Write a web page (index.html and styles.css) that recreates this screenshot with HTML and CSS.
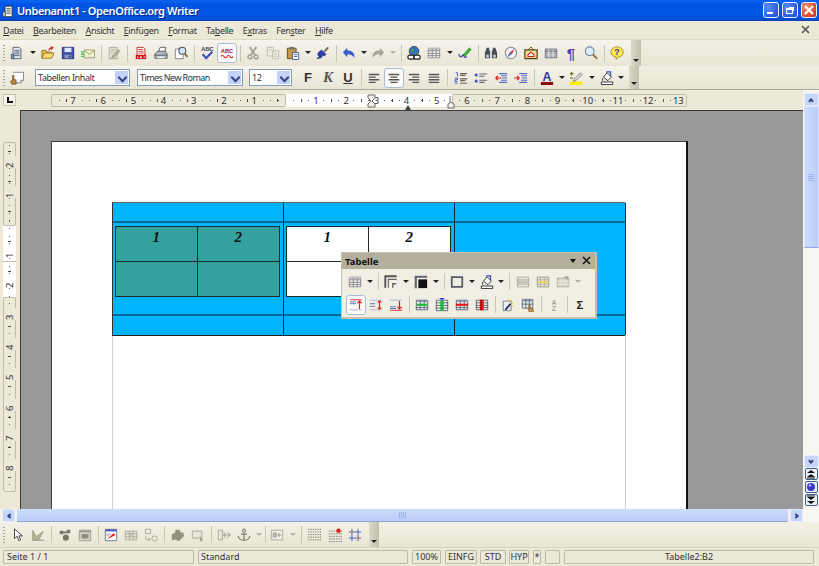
FILE: index.html
```html
<!DOCTYPE html>
<html lang="de">

<head>
	<meta charset="UTF-8">
	<title>Unbenannt1 - OpenOffice.org Writer</title>
	<link rel="stylesheet" href="styles.css">
</head>

<body>
	<!-- icon sprite, all 16x16 -->
	<svg class="sprite" xmlns="http://www.w3.org/2000/svg">
		<symbol id="i-new" viewBox="0 0 16 16"><path d="M3.5 1.5h7l2 2v11h-9z" fill="#e9eef4" stroke="#46566e"/><path d="M5 5h6M5 7h6M5 9h6M5 11h6" stroke="#46566e"/><path d="M1.5 9.5h3v5h-3z" fill="#7d8ea6" stroke="#46566e"/></symbol>
		<symbol id="i-open" viewBox="0 0 16 16"><path d="M1 14V5h5l1 2h5v2" fill="#e8b93c" stroke="#8f7020"/><path d="M1 14l3-6h11l-3 6z" fill="#f8dc78" stroke="#8f7020"/><path d="M9 5c0-2 2-3 4-3M11 1l2.5 1-2 2" fill="none" stroke="#d8201c" stroke-width="1.3"/></symbol>
		<symbol id="i-save" viewBox="0 0 16 16"><path d="M1.5 1.5h13v13h-13z" fill="#3a50a8" stroke="#1f2d70"/><path d="M4 2h8v5H4z" fill="#dfe6f5"/><path d="M4 10h8v4H4z" fill="#8c96b8"/><path d="M9 11h2v2H9z" fill="#1f2d70"/></symbol>
		<symbol id="i-mail" viewBox="0 0 16 16"><path d="M3.5 4.5h12v9h-12z" fill="#f4f0c8" stroke="#8c9a7a"/><path d="M3.5 5l6 4.5 6-4.5" fill="none" stroke="#8c9a7a"/><path d="M0 7h3M0 9.5h4M0 12h3" stroke="#2fc24a" stroke-width="1.3"/></symbol>
		<symbol id="i-edit" viewBox="0 0 16 16"><path d="M2.5 1.5h9v13h-9z" fill="#e9e6d8" stroke="#a5a294"/><path d="M4 4h6M4 6h5M4 8h3" stroke="#b5b2a4"/><path d="M6 11l7-7 2 2-7 7-3 1z" fill="#aeab9a" stroke="#8e8b7c" stroke-width=".5"/></symbol>
		<symbol id="i-pdf" viewBox="0 0 16 16"><path d="M3.5 1.5h7l2 2v9h-9z" fill="#fff" stroke="#a52020"/><path d="M5 4h5M5 6h6M5 8h6" stroke="#d03030"/><path d="M2 10h12v5H2z" fill="#d01818"/><path d="M4 12h1v2H4zM7 12h2v2H7zM11 12h2v1h-2z" fill="#fff"/></symbol>
		<symbol id="i-print" viewBox="0 0 16 16"><path d="M5 7l2-5.5h6.5L12 7z" fill="#fff" stroke="#50545e"/><path d="M1 9l3-3h9l2 3v5H1z" fill="#b9bcc4" stroke="#50545e"/><path d="M1 10h14v1H1z" fill="#50545e"/><path d="M11 8h2v1h-2z" fill="#22c060"/><path d="M4 12h8v2H4z" fill="#eee"/></symbol>
		<symbol id="i-preview" viewBox="0 0 16 16"><path d="M1.5 3.5h9v11h-9z" fill="#fff" stroke="#7a7a80"/><circle cx="9.5" cy="5.5" r="4" fill="#cfe4f7" stroke="#50586a" stroke-width="1.2"/><path d="M12 8.5l3.5 4" stroke="#8a7038" stroke-width="2.2"/></symbol>
		<symbol id="i-cut" viewBox="0 0 16 16"><path d="M4 1l7 10M12 1L5 11" stroke="#a8a598" stroke-width="2.2"/><circle cx="4.5" cy="12.5" r="2.2" fill="none" stroke="#a8a598" stroke-width="1.8"/><circle cx="11.5" cy="12.5" r="2.2" fill="none" stroke="#a8a598" stroke-width="1.8"/></symbol>
		<symbol id="i-copy" viewBox="0 0 16 16"><path d="M1.5 1.5h7v10h-7z" fill="#f2f0e6" stroke="#b9b6a8"/><path d="M7.5 5.5h7v9h-7z" fill="#f2f0e6" stroke="#b9b6a8"/><path d="M3 4h4M3 6h3M9 8h4M9 10h4M9 12h4" stroke="#c5c2b4"/></symbol>
		<symbol id="i-paste" viewBox="0 0 16 16"><path d="M1.5 2.5h10v12h-10z" fill="#c49a4a" stroke="#5a4520"/><path d="M4 1h5v3H4z" fill="#6f7078"/><path d="M7.5 7.5h7v8h-7z" fill="#fff" stroke="#3c50a0"/><path d="M9 10h4M9 12h4" stroke="#3c50a0"/></symbol>
		<symbol id="i-brush" viewBox="0 0 16 16"><path d="M9.5 6.5l4.5-5" stroke="#7a6a40" stroke-width="2.2"/><path d="M6.5 4.500l5 5-2 2-2-1-1.500 3-5 1 3-3-2-1 .5-3z" fill="#2f3fa8" stroke="#1c2670" stroke-width=".6"/></symbol>
		<symbol id="i-undo" viewBox="0 0 16 16"><path d="M1 7l5-5v3c5 0 9 2 8 9-1-3-4-4.5-8-4.5V13z" fill="#3b5cc8"/></symbol>
		<symbol id="i-redo" viewBox="0 0 16 16"><path d="M15 7l-5-5v3c-5 0-9 2-8 9 1-3 4-4.5 8-4.5V13z" fill="#a8a598"/></symbol>
		<symbol id="i-globe" viewBox="0 0 16 16"><circle cx="8" cy="6" r="5.5" fill="#3a6ac8" stroke="#345"/><path d="M5 2l3 2-1 3-3-1zM9 7l3 0 0 3-3 0z" fill="#36a24a"/><rect x="1" y="10.5" width="7" height="4.5" rx="2.2" fill="#fff" stroke="#222" stroke-width="1.4"/><rect x="8" y="10.5" width="7" height="4.5" rx="2.2" fill="#fff" stroke="#222" stroke-width="1.4"/></symbol>
		<symbol id="i-table" viewBox="0 0 16 16"><path d="M1.5 2.5h13v11h-13z" fill="#f5f4ee" stroke="#85858a"/><path d="M1.5 2.5h13V5h-13z" fill="#c6c6ca"/><path d="M1 5.5h14M1 8.500h14M1 11h14M6 3v10M10.5 3v10" stroke="#85858a"/></symbol>
		<symbol id="i-draw" viewBox="0 0 16 16"><path d="M1 9q1 5 3 3t2-2 1 2 3 0" fill="none" stroke="#4a3aa8" stroke-width="1.3"/><path d="M6 10l7-8 2 2-7 8z" fill="#36b836" stroke="#1a701a" stroke-width=".6"/></symbol>
		<symbol id="i-find" viewBox="0 0 16 16"><path d="M3 2h3v3h1v9H1V8zM13 2h-3v3H9v9h6V8z" fill="#4a4e58"/><path d="M2.5 10h3v3h-3zM10.5 10h3v3h-3z" fill="#cfd2da"/></symbol>
		<symbol id="i-nav" viewBox="0 0 16 16"><circle cx="8" cy="8" r="6.5" fill="#eef0f4" stroke="#8a8f9a" stroke-width="1.2"/><path d="M12 3.5L7 7l2 2z" fill="#d82020"/><path d="M4 12.5L7 7l2 2z" fill="#3a50b8"/></symbol>
		<symbol id="i-gallery" viewBox="0 0 16 16"><path d="M5 4.5L8 1l3 3.500" fill="none" stroke="#6a4a10"/><path d="M1 4.5h14v10H1z" fill="#f0d890" stroke="#5f4410" stroke-width="1.4"/><path d="M4.5 10L8 7l3.5 3v2h-7z" fill="#fff" stroke="#d8201c" stroke-width="1.2"/></symbol>
		<symbol id="i-data" viewBox="0 0 16 16"><path d="M1.5 3.5h13v10h-13z" fill="#bec1c6" stroke="#6a6e76"/><path d="M1 6h14" stroke="#6a6e76" stroke-width="1.3"/><path d="M5.5 4v9M10.5 4v9" stroke="#e8e8ea"/><path d="M3 8h1v1H3zM3 11h1v1H3zM7.5 8h1v1h-1zM7.5 11h1v1h-1zM12 8h1v1h-1zM12 11h1v1h-1z" fill="#555"/></symbol>
		<symbol id="i-zoom" viewBox="0 0 16 16"><circle cx="6.5" cy="6" r="5" fill="#dcecf8" stroke="#7a8a9a" stroke-width="1.3"/><path d="M10 9.5l5 5" stroke="#9a8048" stroke-width="2.5"/></symbol>
		<symbol id="i-styles" viewBox="0 0 16 16"><path d="M3.5 1.5h12v9l-3 3h-6" fill="#fff" stroke="#7a7a80"/><path d="M12.5 13.5v-3h3" fill="#ddd" stroke="#7a7a80"/><path d="M3 5h1.5v5H7v5H2L.5 12 2 10.500h1z" fill="#bd8a3e" stroke="#55400f" stroke-width=".7"/></symbol>
		<symbol id="i-left" viewBox="0 0 16 16"><path d="M2 4h12M2 7h8M2 10h12M2 13h8" stroke="#555" stroke-width="1.6"/></symbol>
		<symbol id="i-center" viewBox="0 0 16 16"><path d="M2 4h12M4 7h8M2 10h12M4 13h8" stroke="#555" stroke-width="1.6"/></symbol>
		<symbol id="i-right" viewBox="0 0 16 16"><path d="M2 4h12M6 7h8M2 10h12M6 13h8" stroke="#555" stroke-width="1.6"/></symbol>
		<symbol id="i-just" viewBox="0 0 16 16"><path d="M2 4h12M2 7h12M2 10h12M2 13h12" stroke="#555" stroke-width="1.6"/></symbol>
		<symbol id="i-num" viewBox="0 0 16 16"><path d="M2 2h2v4M1 8h3v2H1v2h3M1 14h3" fill="none" stroke="#3a4fc0"/><path d="M7 3h8M7 5h6M7 9h8M7 11h6M7 14h8" stroke="#666" stroke-width="1.2"/></symbol>
		<symbol id="i-bull" viewBox="0 0 16 16"><path d="M1 3h3v3H1zM1 10h3v3H1z" fill="#3a4fc0"/><path d="M6 3.5h9M6 6h6M6 10.5h9M6 13h6" stroke="#666" stroke-width="1.2"/></symbol>
		<symbol id="i-out" viewBox="0 0 16 16"><path d="M6 3h9M8 5.5h7M8 10.5h7M6 13h9" stroke="#5a6ec8" stroke-width="1.2"/><path d="M8 8H2M4.5 5.5L2 8l2.5 2.5" fill="none" stroke="#e01818" stroke-width="1.3"/><path d="M9 8h6" stroke="#5a6ec8" stroke-width="1.2"/></symbol>
		<symbol id="i-in" viewBox="0 0 16 16"><path d="M6 3h9M8 5.5h7M8 10.5h7M6 13h9" stroke="#5a6ec8" stroke-width="1.2"/><path d="M0 8h6M3.5 5.5L6 8l-2.5 2.5" fill="none" stroke="#e01818" stroke-width="1.3"/><path d="M9 8h6" stroke="#5a6ec8" stroke-width="1.2"/></symbol>
		<symbol id="i-mark" viewBox="0 0 16 16"><path d="M1 12h14v4H1z" fill="#ffef00"/><path d="M6 9l7-7 2 2-7 7-3 1z" fill="#d8d8d0" stroke="#555" stroke-width=".7"/><path d="M1 3h4M3 1v4M1 8h4" stroke="#6a6a20" stroke-width="1.4"/></symbol>
		<symbol id="i-fill" viewBox="0 0 16 16"><path d="M4 7l4-5 5 5-4 4z" fill="#fff" stroke="#222"/><path d="M7 1l5 0v5" fill="none" stroke="#3a4fc0" stroke-width="1.5"/><path d="M3 8v3" stroke="#222"/><path d="M1.5 12.5h13v3h-13z" fill="#fff" stroke="#222"/></symbol>
		<symbol id="i-border" viewBox="0 0 16 16"><path d="M1.5 14.5v-13h13" fill="none" stroke="#555" stroke-width="2.2"/><path d="M5 14.5V5h9.500" fill="none" stroke="#666" stroke-width="1.2"/><path d="M10 14.5V10h4" fill="none" stroke="#666" stroke-width="1.6"/></symbol>
		<symbol id="i-line" viewBox="0 0 16 16"><path d="M2 15V2h13" fill="none" stroke="#667" stroke-width="2.5"/><path d="M5 5h10v10H5z" fill="#111"/></symbol>
		<symbol id="i-square" viewBox="0 0 16 16"><path d="M2 2.5h12v11H2z" fill="#f0eee0" stroke="#555b68" stroke-width="2"/></symbol>
		<symbol id="i-merge" viewBox="0 0 16 16"><path d="M1.5 2.5h13v11h-13z" fill="#eeeade" stroke="#a8a598"/><path d="M1 5.5h14M1 10.5h14" stroke="#a8a598"/><path d="M2 6h12v4H2z" fill="#c8c5b6"/></symbol>
		<symbol id="i-split" viewBox="0 0 16 16"><path d="M1.5 2.5h13v11h-13z" fill="#eeeade" stroke="#8e8c80"/><path d="M1 5.5h14M1 10.5h14M5 3v10M10 3v10" stroke="#a8a598"/><path d="M3 7h10v2H3z" fill="#e6d848"/></symbol>
		<symbol id="i-opt" viewBox="0 0 16 16"><path d="M1.5 3.5h13v10h-13z" fill="#d8d5c6" stroke="#a8a598"/><path d="M1 7h14M1 10.5h14M6 4v9M10.5 4v9" stroke="#eeeade"/><path d="M9 2l5-1-1 5z" fill="#a8a598"/></symbol>
		<symbol id="i-vtop" viewBox="0 0 16 16"><path d="M1.5 2h13" stroke="#d8201c"/><path d="M1 4.5h7M1 6.5h7" stroke="#4a6ac8"/><path d="M12 12.5v-9M9.5 6L12 3.5 14.5 6" fill="none" stroke="#d8201c" stroke-width="1.3"/><path d="M1 13.5h14" stroke="#a8b4d8"/></symbol>
		<symbol id="i-vmid" viewBox="0 0 16 16"><path d="M1 6.5h6M1 9.5h6" stroke="#4a6ac8"/><path d="M12 3v10M10 5l2-2 2 2M10 11l2 2 2-2" fill="none" stroke="#d8201c" stroke-width="1.3"/><path d="M1 2.5h14M1 13.5h14" stroke="#a8b4d8"/></symbol>
		<symbol id="i-vbot" viewBox="0 0 16 16"><path d="M1 2.5h14" stroke="#a8b4d8"/><path d="M1 10h7M1 12h7" stroke="#4a6ac8"/><path d="M12 3.5v9M9.5 10l2.5 2.5 2.5-2.5" fill="none" stroke="#d8201c" stroke-width="1.3"/><path d="M1 14h14" stroke="#d8201c"/></symbol>
		<symbol id="i-rowin" viewBox="0 0 16 16"><path d="M1.5 2.5h13v11h-13z" fill="#eef0f2" stroke="#55606e"/><path d="M1.5 2.5h13v2h-13z" fill="#8e98a8"/><path d="M6 3v10M10.5 3v10M1 11h14" stroke="#55606e"/><path d="M2 6.5h12V9H2z" fill="#22b83a"/></symbol>
		<symbol id="i-colin" viewBox="0 0 16 16"><path d="M1.5 2.5h13v12h-13z" fill="#eef0f2" stroke="#55606e"/><path d="M1 5.5h14M1 8.5h14M1 11.5h14" stroke="#55606e"/><path d="M6 3h4v11.5H6z" fill="#22b83a"/><path d="M5 0h6L8 3z" fill="#4040d8"/></symbol>
		<symbol id="i-rowdel" viewBox="0 0 16 16"><path d="M1.5 2.5h13v11h-13z" fill="#eef0f2" stroke="#55606e"/><path d="M1.5 2.5h13v2h-13z" fill="#8e98a8"/><path d="M6 3v10M10.5 3v10M1 11h14" stroke="#55606e"/><path d="M1 6.5h14V9H1z" fill="#e01818"/></symbol>
		<symbol id="i-coldel" viewBox="0 0 16 16"><path d="M1.5 2.5h13v11h-13z" fill="#eef0f2" stroke="#55606e"/><path d="M1 5.5h14M1 8.5h14M1 11h14" stroke="#55606e"/><path d="M5.5 2H10v12H5.500z" fill="#e01818"/><path d="M7 2v12" stroke="#7a0c0c"/></symbol>
		<symbol id="i-auto" viewBox="0 0 16 16"><path d="M2.5 3.5h9v11h-9z" fill="#eef0f6" stroke="#6a7488"/><path d="M4 13l6-7 1.5 1.5L6 14z" fill="#2a2a50"/><path d="M9 1v3M12 2l-1 2M14 5l-2 1M14 9h-2" stroke="#e8c820" stroke-width="1.3"/></symbol>
		<symbol id="i-props" viewBox="0 0 16 16"><path d="M1.5 1.5h12v10h-12z" fill="#eef0f2" stroke="#55606e"/><path d="M1.5 1.5h12V4h-12z" fill="#8e98a8"/><path d="M1 7h13M5.5 2v10M9.5 2v10" stroke="#55606e"/><path d="M9 8h1.5v4H13l1 .5V16H9.5L8 13l1-.5z" fill="#c89a50" stroke="#55400f" stroke-width=".6"/></symbol>
		<symbol id="i-sel" viewBox="0 0 16 16"><path d="M4 1v11l3-2.500 2 5 2-1-2-4.500h4z" fill="#fff" stroke="#333"/></symbol>
		<symbol id="i-pts" viewBox="0 0 16 16"><path d="M2 3l4 7 8-6-5 9H2z" fill="#b5b89c" stroke="#94967e"/><path d="M1 14h14" stroke="#a8a598" stroke-width="1.5"/></symbol>
		<symbol id="i-grp" viewBox="0 0 16 16"><path d="M2 3h4v4H2zM10 2h4v4h-4z" fill="#76776a"/><circle cx="9" cy="11" r="3.5" fill="#76776a"/><path d="M5 5h6" stroke="#76776a" stroke-width="2"/></symbol>
		<symbol id="i-dlg" viewBox="0 0 16 16"><path d="M1.5 2.5h13v12h-13z" fill="#d8d5c6" stroke="#9a988a"/><path d="M2 3h12v2H2z" fill="#9a988a"/><path d="M4 7h8v5H4z" fill="#8e8c80"/></symbol>
		<symbol id="i-form" viewBox="0 0 16 16"><path d="M1.5 1.5h13v13h-13z" fill="#fff" stroke="#6a7488"/><path d="M1.5 1.5h13V4h-13z" fill="#4a60c8"/><path d="M3 13l8-7 2 2z" fill="#e01818"/><path d="M3 7h5M3 9h3" stroke="#8a8a90"/></symbol>
		<symbol id="i-ctbl" viewBox="0 0 16 16"><path d="M1.5 3.5h13v10h-13z" fill="#e9e6d8" stroke="#a8a598"/><path d="M1 6.5h14M1 10h14M6 4v9M10.5 4v9" stroke="#a8a598"/><path d="M7 7h3v3H7z" fill="#c5c2b4"/></symbol>
		<symbol id="i-wiz" viewBox="0 0 16 16"><path d="M1.5 1.5h6v5h-6z" fill="#eeeade" stroke="#a8a598"/><path d="M2 9v4h5" fill="none" stroke="#a8a598"/><path d="M5 11l2 2-2 2" fill="none" stroke="#a8a598"/><circle cx="12" cy="12" r="3" fill="none" stroke="#a8a598"/></symbol>
		<symbol id="i-obj" viewBox="0 0 16 16"><path d="M1 7l4-2V2h5l1 3h3l1 4-6 6-4-2-4 1z" fill="#94917f"/></symbol>
		<symbol id="i-area" viewBox="0 0 16 16"><path d="M1.5 3.5h11v8h-11z" fill="#e9e6d8" stroke="#a8a598"/><path d="M10 9l4 5-2 .5-1 1.500z" fill="#9a988a"/></symbol>
		<symbol id="i-pos" viewBox="0 0 16 16"><path d="M1.5 2.5h5v11h-5z" fill="#e9e6d8" stroke="#a8a598"/><path d="M6 8h9M12 5l3 3-3 3M9 5v6" fill="none" stroke="#a8a598" stroke-width="1.2"/></symbol>
		<symbol id="i-anchor" viewBox="0 0 16 16"><circle cx="8" cy="3" r="1.7" fill="none" stroke="#8a8878" stroke-width="1.3"/><path d="M8 5v9M4.500 7h7M1.500 9c0 3 3 5 6.500 5s6.500-2 6.500-5" fill="none" stroke="#8a8878" stroke-width="1.6"/></symbol>
		<symbol id="i-wrap" viewBox="0 0 16 16"><path d="M1.5 2.5h13v11h-13z" fill="#f2f0e6" stroke="#a8a598"/><path d="M3 5h5v6H3z" fill="#b5b2a4"/><path d="M13 8H9M11 6L9 8l2 2" fill="none" stroke="#8a8878"/></symbol>
		<symbol id="i-grid" viewBox="0 0 16 16"><path d="M1 1.5h15M1 4.5h15M1 7.5h15M1 10.5h15M1 13.5h15" stroke="#555" stroke-dasharray="1 1"/></symbol>
		<symbol id="i-gridr" viewBox="0 0 16 16"><path d="M1 3.5h15M1 6.5h15M1 9.5h15M1 12.5h15M1 15.5h15" stroke="#555" stroke-dasharray="1 1"/><circle cx="12" cy="3" r="2.5" fill="#d81818"/></symbol>
		<symbol id="i-lines" viewBox="0 0 16 16"><path d="M1 4.5h14M1 11.5h14M4.5 1v14M11.5 1v14" stroke="#3a50c8"/><path d="M3.5 3.5h2v2h-2zM10.5 10.5h2v2h-2z" fill="#d8901c"/></symbol>
	</svg>

	<div class="app">
		<div class="titlebar">
			<svg class="title-icon" viewBox="0 0 16 16"><path d="M3.5 2.5h8v12h-8z" fill="#fff" stroke="#333"/><path d="M5 5h5M5 7h5M5 9h5M5 11h5" stroke="#555"/><path d="M1 9h3v5H1z" fill="#c8c8c8" stroke="#333" stroke-width=".6"/></svg>
			<span class="title-text">Unbenannt1 - OpenOffice.org Writer</span>
			<div class="winbtns">
				<div class="winbtn"><span class="glyph-min"></span></div>
				<div class="winbtn"><span class="glyph-max"></span></div>
				<div class="winbtn close"><svg viewBox="0 0 16 16" width="16" height="16"><path d="M4 4l8 8M12 4l-8 8" stroke="#fff" stroke-width="2.2"/></svg></div>
			</div>
		</div>

		<div class="menubar">
			<span class="menu"><u>D</u>atei</span>
			<span class="menu"><u>B</u>earbeiten</span>
			<span class="menu"><u>A</u>nsicht</span>
			<span class="menu"><u>E</u>infügen</span>
			<span class="menu"><u>F</u>ormat</span>
			<span class="menu">Ta<u>b</u>elle</span>
			<span class="menu">E<u>x</u>tras</span>
			<span class="menu">Fen<u>s</u>ter</span>
			<span class="menu"><u>H</u>ilfe</span>
			<svg class="doc-close" viewBox="0 0 10 10"><path d="M1 1l7 7M8 1L1 8" stroke="#555" stroke-width="1.5"/></svg>
		</div>

		<div class="tbrow">
			<div class="tb">
				<span class="grip"></span>
				<span class="b"><svg class="ic"><use href="#i-new"/></svg></span><span class="d w11"></span>
				<span class="b"><svg class="ic"><use href="#i-open"/></svg></span>
				<span class="b"><svg class="ic"><use href="#i-save"/></svg></span>
				<span class="b"><svg class="ic"><use href="#i-mail"/></svg></span>
				<span class="s"></span>
				<span class="b"><svg class="ic"><use href="#i-edit"/></svg></span>
				<span class="s w7"></span>
				<span class="b"><svg class="ic"><use href="#i-pdf"/></svg></span>
				<span class="b"><svg class="ic"><use href="#i-print"/></svg></span>
				<span class="b"><svg class="ic"><use href="#i-preview"/></svg></span>
				<span class="s"></span>
				<span class="b"><svg class="ic" viewBox="0 0 16 16"><text x="8.5" y="6" class="ictext" font-size="6.5" fill="#333a58">ABC</text><path d="M3 9.5l4 4.5 7-7.5" fill="none" stroke="#3a4fc0" stroke-width="2.4"/></svg></span>
				<span class="b on"><svg class="ic" viewBox="0 0 16 16"><text x="8" y="8" class="ictext" font-size="6.5" fill="#8a1f2f">ABC</text><path d="M1 12q1.750-3 3.500 0t3.500 0 3.500 0 3.500 0" fill="none" stroke="#e8201c" stroke-width="1.2"/></svg></span>
				<span class="s"></span>
				<span class="b"><svg class="ic"><use href="#i-cut"/></svg></span>
				<span class="b"><svg class="ic"><use href="#i-copy"/></svg></span>
				<span class="b"><svg class="ic"><use href="#i-paste"/></svg></span><span class="d"></span>
				<span class="b"><svg class="ic"><use href="#i-brush"/></svg></span>
				<span class="s"></span>
				<span class="b"><svg class="ic"><use href="#i-undo"/></svg></span><span class="d w9"></span>
				<span class="b"><svg class="ic"><use href="#i-redo"/></svg></span><span class="d off"></span>
				<span class="s"></span>
				<span class="b"><svg class="ic"><use href="#i-globe"/></svg></span>
				<span class="b"><svg class="ic"><use href="#i-table"/></svg></span><span class="d w11"></span>
				<span class="b"><svg class="ic"><use href="#i-draw"/></svg></span>
				<span class="s"></span>
				<span class="b"><svg class="ic"><use href="#i-find"/></svg></span>
				<span class="b"><svg class="ic"><use href="#i-nav"/></svg></span>
				<span class="b"><svg class="ic"><use href="#i-gallery"/></svg></span>
				<span class="b"><svg class="ic"><use href="#i-data"/></svg></span>
				<span class="b para">¶</span>
				<span class="b"><svg class="ic"><use href="#i-zoom"/></svg></span>
				<span class="s"></span>
				<span class="b"><svg class="ic" viewBox="0 0 16 16"><path d="M8 1c4 0 7 2.500 7 6s-3 5.500-5 5.500L7 15v-2.600C4 12.200 1 10.500 1 7s3-6 7-6z" fill="#ffe94a" stroke="#a08a20"/><text x="8" y="10.5" class="ictext" font-size="10" fill="#2a30a8">?</text></svg></span>
				<span class="handle"></span>
			</div>
		</div>

		<div class="tbrow second">
			<div class="tb">
				<span class="grip"></span>
				<span class="b"><svg class="ic"><use href="#i-styles"/></svg></span>
				<div class="combo style-box"><span class="combo-text">Tabellen Inhalt</span><span class="combo-btn"></span></div>
				<div class="combo font-box"><span class="combo-text">Times New Roman</span><span class="combo-btn"></span></div>
				<div class="combo size-box"><span class="combo-text">12</span><span class="combo-btn"></span></div>
				<span class="b letter bold">F</span>
				<span class="b letter ital">K</span>
				<span class="b letter under">U</span>
				<span class="s"></span>
				<span class="b"><svg class="ic"><use href="#i-left"/></svg></span>
				<span class="b on"><svg class="ic"><use href="#i-center"/></svg></span>
				<span class="b"><svg class="ic"><use href="#i-right"/></svg></span>
				<span class="b"><svg class="ic"><use href="#i-just"/></svg></span>
				<span class="s w7"></span>
				<span class="b"><svg class="ic"><use href="#i-num"/></svg></span>
				<span class="b"><svg class="ic"><use href="#i-bull"/></svg></span>
				<span class="b"><svg class="ic"><use href="#i-out"/></svg></span>
				<span class="b"><svg class="ic"><use href="#i-in"/></svg></span>
				<span class="s"></span>
				<span class="b"><svg class="ic" viewBox="0 0 16 16"><text x="8" y="11.5" class="ictext" font-size="14" fill="#2a3a98">A</text><path d="M1 12.5h14V16H1z" fill="#8a0c0c"/></svg></span><span class="d w9"></span>
				<span class="b"><svg class="ic"><use href="#i-mark"/></svg></span><span class="d w11"></span>
				<span class="b"><svg class="ic"><use href="#i-fill"/></svg></span><span class="d w8"></span>
				<span class="handle"></span>
			</div>
		</div>

		<div class="body">
			<div class="editor">
				<div class="hruler-row">
					<div class="corner"><span class="corner-mark"></span></div>
					<div class="hr-seg gray first"><span>7</span><span>6</span><span>5</span><span>4</span><span>3</span><span>2</span><span>1</span></div>
					<div class="hr-seg white"><span>1</span><span>2</span><span>3</span><span>4</span><span>5</span></div>
					<div class="hr-seg gray last"><span>6</span><span>7</span><span>8</span><span>9</span><span>10</span><span>11</span><span>12</span><span>13</span></div>
					<svg class="marker tab-mark" viewBox="0 0 10 14"><path d="M1 1h7v3L5 7l3 3v3H1v-3l3-3-3-3z" fill="#f4f2e8" stroke="#666"/></svg>
					<svg class="marker tab-tick" viewBox="0 0 6 5"><path d="M3 0l3 5H0z" fill="#444"/></svg>
					<svg class="marker end-mark" viewBox="0 0 8 14"><path d="M3 1v6M1 13V9l3-2 3 2v4z" fill="#f4f2e8" stroke="#666"/></svg>
				</div>
				<div class="work-row">
					<div class="vruler">
						<div class="vr-seg gray top"><span>2</span><span>1</span></div>
						<div class="vr-seg white"><span>1</span><span>2</span></div>
						<div class="vr-seg gray rest"><span>3</span><span>4</span><span>5</span><span>6</span><span>7</span><span>8</span></div>
					</div>
					<div class="workspace">
						<div class="page">
							<div class="textarea">
								<div class="outer">
									<div class="cell"></div>
									<div class="cell"></div>
									<div class="cell last-col"></div>
									<div class="cell mid">
										<div class="inner teal">
											<div class="in-cell">1</div>
											<div class="in-cell">2</div>
											<div class="in-cell"></div>
											<div class="in-cell"></div>
										</div>
									</div>
									<div class="cell mid">
										<div class="inner blank">
											<div class="in-cell">1</div>
											<div class="in-cell">2</div>
											<div class="in-cell"></div>
											<div class="in-cell"></div>
										</div>
									</div>
									<div class="cell mid last-col"></div>
									<div class="cell"></div>
									<div class="cell"></div>
									<div class="cell last-col"></div>
								</div>
							</div>
						</div>
					</div>
				</div>
				<div class="hscroll">
					<span class="sb-btn"><i class="chev left"></i></span>
					<span class="hthumb"><i class="grip-h"></i></span>
					<span class="sb-btn"><i class="chev right"></i></span>
				</div>
			</div>
			<div class="vscroll">
				<span class="sb-btn v"><i class="chev up"></i></span>
				<span class="vthumb"><i class="grip-v"></i></span>
				<span class="vtrack"></span>
				<span class="sb-btn v"><i class="chev down"></i></span>
				<span class="navbtn"><svg viewBox="0 0 10 10" width="10" height="10"><path d="M1 4l4-3 4 3zM1 8l4-3 4 3z" fill="#111"/><path d="M1 9h8" stroke="#111"/></svg></span>
				<span class="navbtn"><svg viewBox="0 0 10 10" width="10" height="10"><circle cx="5" cy="5" r="4" fill="#3a3ac8"/><circle cx="4" cy="3.5" r="1.2" fill="#b8b8f8"/></svg></span>
				<span class="navbtn"><svg viewBox="0 0 10 10" width="10" height="10"><path d="M1 1h8" stroke="#111"/><path d="M1 2l4 3 4-3zM1 6l4 3 4-3z" fill="#111"/></svg></span>
			</div>
		</div>

		<div class="tbrow third">
			<div class="tb">
				<span class="grip"></span>
				<span class="b m1"><svg class="ic"><use href="#i-sel"/></svg></span>
				<span class="b"><svg class="ic"><use href="#i-pts"/></svg></span>
				<span class="s"></span>
				<span class="b m1"><svg class="ic"><use href="#i-grp"/></svg></span>
				<span class="b"><svg class="ic"><use href="#i-dlg"/></svg></span>
				<span class="s"></span>
				<span class="b"><svg class="ic"><use href="#i-form"/></svg></span>
				<span class="b"><svg class="ic"><use href="#i-ctbl"/></svg></span>
				<span class="b"><svg class="ic"><use href="#i-wiz"/></svg></span>
				<span class="s"></span>
				<span class="b m1"><svg class="ic"><use href="#i-obj"/></svg></span>
				<span class="b"><svg class="ic"><use href="#i-area"/></svg></span>
				<span class="s"></span>
				<span class="b"><svg class="ic"><use href="#i-pos"/></svg></span>
				<span class="b"><svg class="ic"><use href="#i-anchor"/></svg></span><span class="d w9 off"></span>
				<span class="s w4"></span>
				<span class="b"><svg class="ic"><use href="#i-wrap"/></svg></span>
				<span class="d w11 off"></span>
				<span class="s"></span>
				<span class="b"><svg class="ic"><use href="#i-grid"/></svg></span>
				<span class="b m1"><svg class="ic"><use href="#i-gridr"/></svg></span>
				<span class="b"><svg class="ic"><use href="#i-lines"/></svg></span>
				<span class="handle"></span>
			</div>
		</div>

		<div class="statusbar">
			<span class="field f-page">Seite 1 / 1</span>
			<span class="field f-style">Standard</span>
			<span class="field f-zoom">100%</span>
			<span class="field f-ins">EINFG</span>
			<span class="field f-std">STD</span>
			<span class="field f-hyp">HYP</span>
			<span class="field f-star">*</span>
			<span class="field f-blank"></span>
			<span class="field f-cell">Tabelle2:B2</span>
		</div>

		<!-- floating table toolbar -->
		<div class="palette">
			<div class="pal-title">
				<span class="pal-name">Tabelle</span>
				<span class="pal-arrow"></span>
				<svg class="pal-close" viewBox="0 0 10 10"><path d="M1 1l7 7M8 1L1 8" stroke="#111" stroke-width="1.5"/></svg>
			</div>
			<div class="pal-row one">
				<span class="b"><svg class="ic"><use href="#i-table"/></svg></span><span class="d"></span>
				<span class="s"></span>
				<span class="b"><svg class="ic"><use href="#i-border"/></svg></span><span class="d"></span>
				<span class="b"><svg class="ic"><use href="#i-line"/></svg></span><span class="d"></span>
				<span class="s"></span>
				<span class="b"><svg class="ic"><use href="#i-square"/></svg></span><span class="d w9"></span>
				<span class="b m1"><svg class="ic"><use href="#i-fill"/></svg></span><span class="d w8"></span>
				<span class="s m1"></span>
				<span class="b m1"><svg class="ic"><use href="#i-merge"/></svg></span>
				<span class="b"><svg class="ic"><use href="#i-split"/></svg></span>
				<span class="b"><svg class="ic"><use href="#i-opt"/></svg></span><span class="d off"></span>
			</div>
			<div class="pal-row two">
				<span class="b on"><svg class="ic"><use href="#i-vtop"/></svg></span>
				<span class="b"><svg class="ic"><use href="#i-vmid"/></svg></span>
				<span class="b"><svg class="ic"><use href="#i-vbot"/></svg></span>
				<span class="s"></span>
				<span class="b"><svg class="ic"><use href="#i-rowin"/></svg></span>
				<span class="b"><svg class="ic"><use href="#i-colin"/></svg></span>
				<span class="b"><svg class="ic"><use href="#i-rowdel"/></svg></span>
				<span class="b"><svg class="ic"><use href="#i-coldel"/></svg></span>
				<span class="s"></span>
				<span class="b"><svg class="ic"><use href="#i-auto"/></svg></span>
				<span class="b"><svg class="ic"><use href="#i-props"/></svg></span>
				<span class="s"></span>
				<span class="b"><svg class="ic" viewBox="0 0 16 16"><text x="8" y="7.5" class="ictext" font-size="8" fill="#a8a598">A</text><text x="8" y="15" class="ictext" font-size="8" fill="#a8a598">Z</text></svg></span>
				<span class="s"></span>
				<span class="b"><svg class="ic" viewBox="0 0 16 16"><text x="8" y="13" class="ictext" font-size="13" fill="#222">Σ</text></svg></span>
			</div>
		</div>
	</div>
</body>

</html>
```

FILE: styles.css
```css
* {
	margin: 0;
	padding: 0;
	box-sizing: border-box;
}

html,
body {
	width: 819px;
	height: 566px;
	overflow: hidden;
}

body {
	font-family: "Noto Sans", "DejaVu Sans", sans-serif;
	font-size: 9px;
	color: #222;
	background-color: #ece9d8;
}

.sprite {
	position: absolute;
	width: 0;
	height: 0;
}

.ictext {
	font-family: "Liberation Sans", sans-serif;
	font-weight: bold;
	text-anchor: middle;
}

.app {
	position: relative;
	width: 819px;
	height: 566px;
	display: flex;
	flex-direction: column;
}

/* title bar */
.titlebar {
	height: 21px;
	flex: none;
	display: flex;
	align-items: center;
	padding-left: 2px;
	background-image: linear-gradient(#0a5fe8, #0a63f0 8%, #0054e3 20%, #0058e8 60%, #0050d8 88%, #0a3fb0);
}

.title-icon {
	width: 14px;
	height: 14px;
}

.title-text {
	margin-left: 1px;
	color: white;
	font-size: 11px;
	font-weight: 600;
	letter-spacing: -0.4px;
	text-shadow: 1px 1px 0 #0a2a90;
}

.winbtns {
	margin-left: auto;
	display: flex;
	gap: 3px;
	padding-right: 2px;
	margin-top: -2px;
}

.winbtn {
	width: 16px;
	height: 16px;
	border: 1px solid #e8eefc;
	border-radius: 3px;
	background-image: radial-gradient(circle at 30% 30%, #5a8cf4, #2a5ce0 70%, #2048c0);
	position: relative;
}

.winbtn.close {
	background-image: radial-gradient(circle at 30% 30%, #f09070, #d8482a 70%, #b83018);
	display: flex;
	align-items: center;
	justify-content: center;
}

.winbtn.close svg {
	flex: none;
}

.glyph-min {
	position: absolute;
	left: 3px;
	bottom: 3px;
	width: 6px;
	height: 2px;
	background-color: white;
}

.glyph-max {
	position: absolute;
	left: 3px;
	top: 5px;
	width: 7px;
	height: 6px;
	border: 1px solid white;
	border-top-width: 2px;
	box-shadow: 2px -2px 0 -1px white;
}

/* menus */
.menubar {
	height: 19px;
	flex: none;
	display: flex;
	align-items: center;
	gap: 9.5px;
	padding-left: 3px;
	padding-right: 8px;
	background-color: #ece9d8;
	border-bottom: 1px solid #dedbc8;
}

.menu {
	color: #333;
	letter-spacing: -0.35px;
}

.doc-close {
	margin-left: auto;
	width: 10px;
	height: 10px;
}

/* toolbars */
.tbrow {
	height: 26px;
	flex: none;
	display: flex;
	background-image: linear-gradient(#f0eee1, #e9e6d5);
}

.tbrow.second {
	height: 24px;
	border-bottom: 1px solid #aca899;
}

.tb {
	display: flex;
	align-items: center;
	height: 100%;
	background-image: linear-gradient(#f6f4ec, #e8e5d5);
}

.third .tb {
	background-image: none;
}

.grip {
	width: 7px;
	height: 16px;
	flex: none;
	background-image: linear-gradient(#a5a294 50%, transparent 50%);
	background-size: 2px 3px;
	background-repeat: repeat-y;
	background-position: 3px 0;
}

.b {
	width: 20px;
	height: 20px;
	flex: none;
	display: flex;
	align-items: center;
	justify-content: center;
	border-radius: 3px;
}

.b.on {
	background-color: #fbfaf6;
	border: 1px solid #a9bdd4;
}

.ic {
	width: 14px;
	height: 14px;
}

.d {
	width: 10px;
	height: 20px;
	flex: none;
	position: relative;
}

.d::after {
	content: "";
	position: absolute;
	left: 50%;
	top: 8px;
	margin-left: -3px;
	border-left: 3px solid transparent;
	border-right: 3px solid transparent;
	border-top: 3px solid #222;
}

.d.off::after {
	border-top-color: #b5b2a4;
}

.d.w8 { width: 8px; }
.d.w9 { width: 9px; }
.d.w11 { width: 11px; }

.s {
	width: 6px;
	height: 17px;
	flex: none;
	background-image: linear-gradient(#c9c6b4, #c9c6b4);
	background-size: 1px 100%;
	background-repeat: no-repeat;
	background-position: center;
}

.s.w7 { width: 7px; }
.s.w4 { width: 4px; }
.m1 { margin-left: 1px; }

.handle {
	width: 10px;
	height: 100%;
	flex: none;
	margin-left: 4px;
	position: relative;
	background-image: linear-gradient(90deg, #dad7c6, #c2bfae);
}

.handle::after {
	content: "";
	position: absolute;
	left: 2px;
	bottom: 4px;
	border-left: 3px solid transparent;
	border-right: 3px solid transparent;
	border-top: 3px solid #222;
}

.para {
	color: #3a4fa8;
	font-family: "Liberation Sans", sans-serif;
	font-size: 15px;
	font-weight: bold;
}

.letter {
	font-family: "Liberation Sans", sans-serif;
	font-size: 13px;
	font-weight: bold;
	color: #333;
}

.letter.ital {
	font-family: "Liberation Serif", serif;
	font-style: italic;
	font-size: 15px;
	color: #555;
}

.letter.under {
	text-decoration: underline;
}

.combo {
	height: 17px;
	flex: none;
	display: flex;
	align-items: center;
	justify-content: space-between;
	background-color: white;
	border: 1px solid #7f9db9;
	padding: 0 1px 0 2px;
}

.style-box {
	width: 95px;
	margin-left: 8px;
}

.font-box {
	width: 106px;
	margin-left: 7px;
}

.size-box {
	width: 43px;
	margin: 0 6px;
}

.combo-text {
	color: #333;
	letter-spacing: -0.4px;
}

.font-box .combo-text {
	letter-spacing: -0.6px;
}

.combo-btn {
	width: 13px;
	height: 13px;
	background-color: #c1d3fb;
	position: relative;
}

.combo-btn::after,
.chev {
	content: "";
	width: 5px;
	height: 5px;
	border-right: 2px solid #33447f;
	border-bottom: 2px solid #33447f;
	display: block;
}

.combo-btn::after {
	position: absolute;
	left: 4px;
	top: 3px;
	transform: rotate(45deg);
}

/* work area */
.body {
	flex: 1;
	min-height: 0;
	display: flex;
}

.editor {
	flex: 1;
	min-width: 0;
	display: flex;
	flex-direction: column;
}

.hruler-row {
	position: relative;
	height: 20px;
	flex: none;
	display: flex;
	align-items: center;
	background-color: #ece9d8;
}

.corner {
	width: 13px;
	height: 12px;
	margin-left: 3px;
	margin-right: 35px;
	background-color: #f6f4ec;
	border: 1px solid #c4c1b0;
	position: relative;
}

.corner-mark {
	position: absolute;
	left: 3px;
	top: 2px;
	width: 6px;
	height: 6px;
	border-left: 2px solid #111;
	border-bottom: 2px solid #111;
}

.hr-seg {
	height: 13px;
	display: flex;
	align-items: center;
	gap: 18.2px;
	font-size: 9.5px;
	color: #333;
	background-repeat: no-repeat;
	background-size: 100% 1px, 100% 3px;
	background-image: repeating-linear-gradient(90deg, #666 0 1px, transparent 1px 7.55px), repeating-linear-gradient(90deg, #444 0 1px, transparent 1px 30.2px);
}

.hr-seg span {
	width: 12px;
	flex: none;
	text-align: center;
	background-color: inherit;
	line-height: 11px;
}

.hr-seg.gray {
	background-color: #ece9d8;
	border: 1px solid #c0bdab;
	border-radius: 2px;
}

.hr-seg.first {
	width: 235px;
	padding-left: 15px;
	background-position: 6.5px 50%, 14px 50%;
}

.hr-seg.white {
	width: 166px;
	padding-left: 24px;
	background-color: white;
	background-position: 7px 50%, 15px 50%;
}

.hr-seg.last {
	width: 235px;
	padding-left: 8px;
	background-position: 6px 50%, 29px 50%;
}

.marker {
	position: absolute;
}

.tab-mark {
	left: 367px;
	top: 4px;
	width: 10px;
	height: 14px;
}

.tab-tick {
	left: 405px;
	top: 15px;
	width: 6px;
	height: 5px;
}

.end-mark {
	left: 447px;
	top: 5px;
	width: 8px;
	height: 14px;
}

.work-row {
	flex: 1;
	min-height: 0;
	display: flex;
}

.vruler {
	width: 20px;
	flex: none;
	padding: 32px 4px 0 3px;
	display: flex;
	flex-direction: column;
	background-color: #ece9d8;
}

.vr-seg {
	display: flex;
	flex-direction: column;
	align-items: center;
	gap: 18.2px;
	flex: none;
	font-size: 9.5px;
	color: #333;
	background-repeat: no-repeat;
	background-image: repeating-linear-gradient(#666 0 1px, transparent 1px 7.55px), repeating-linear-gradient(#444 0 1px, transparent 1px 30.2px);
	background-size: 1px 100%, 3px 100%;
}

.vr-seg span {
	height: 12px;
	line-height: 12px;
	writing-mode: vertical-rl;
	transform: rotate(180deg);
	background-color: inherit;
}

.vr-seg.gray {
	background-color: #ece9d8;
	border: 1px solid #c0bdab;
	border-radius: 2px;
}

.vr-seg.white {
	background-color: white;
	height: 71px;
	padding-top: 20px;
	background-position: 50% 2px, 50% 15px;
	overflow: hidden;
	position: relative;
}

/* page break line in the white part */
.vr-seg.white::after {
	content: "";
	position: absolute;
	left: 0;
	right: 0;
	top: 35px;
	height: 1px;
	background-color: #c0bdab;
}

.vr-seg.top {
	height: 84px;
	justify-content: flex-end;
	padding-bottom: 27px;
	background-position: 50% 2px, 50% 8px;
}

.vr-seg.rest {
	height: 195px;
	padding-top: 10px;
	background-position: 50% 5px, 50% 28px;
}

.workspace {
	flex: 1;
	min-width: 0;
	overflow: hidden;
	padding: 30px 0 0 30px;
	background-color: #999;
	border-left: 1px solid #3c3c3c;
	border-top: 1px solid #3c3c3c;
}

.page {
	width: 637px;
	height: 500px;
	background-color: white;
	border-top: 1px solid #3c3c3c;
	border-left: 1px solid #3c3c3c;
	border-right: 2px solid #111;
	padding: 60px 0 0 60px;
}

.textarea {
	width: 514px;
	height: 100%;
	border-left: 1px solid #d4d0c8;
	border-right: 1px solid #d4d0c8;
}

.outer {
	width: 513px;
	margin-left: -1px;
	display: grid;
	grid-template-columns: 171px 171px 171px;
	grid-template-rows: 20px 93px 19px;
	background-color: #00b4ff;
	border-top: 1px solid #666;
	border-left: 1px solid #333;
	border-bottom: 1px solid #222;
}

.cell {
	border-right: 1px solid #0c2a3c;
	border-bottom: 2px solid #0b6a90;
}

.cell:nth-last-child(-n+3) {
	border-bottom: none;
}

.cell.mid {
	padding: 3px 2px 0 2px;
}

.inner {
	width: 165px;
	height: 71px;
	display: grid;
	grid-template-columns: 1fr 1fr;
	grid-template-rows: 1fr 1fr;
	border: 1px solid #1c2a2c;
}

.inner.teal {
	background-color: #33a19d;
}

.inner.blank {
	background-color: white;
}

.in-cell {
	font-family: "Liberation Serif", serif;
	font-weight: bold;
	font-style: italic;
	font-size: 15px;
	line-height: 20px;
	text-align: center;
	color: #111;
}

.in-cell:nth-child(odd) {
	border-right: 1px solid #1c2a2c;
}

.in-cell:nth-child(-n+2) {
	border-bottom: 1px solid #1c2a2c;
}

/* scrollbars */
.hscroll {
	height: 13px;
	flex: none;
	display: flex;
	align-items: center;
	padding-left: 2px;
	gap: 2px;
	background-color: #f5f4ec;
}

.hthumb {
	flex: 1;
	height: 13px;
	background-image: linear-gradient(#cfdcfb, #b8cdfa);
	border-bottom: 1px solid #8fa9e0;
	display: flex;
	align-items: center;
	justify-content: center;
}

.grip-h {
	width: 7px;
	height: 6px;
	background-image: linear-gradient(90deg, #9ab2ec 50%, transparent 50%);
	background-size: 2px 100%;
}

.sb-btn {
	width: 13px;
	height: 13px;
	flex: none;
	display: flex;
	align-items: center;
	justify-content: center;
	background-color: #c6d6fb;
	border-radius: 2px;
	border: 1px solid #e4ecfd;
}

.sb-btn.v {
	width: 15px;
	height: 13px;
}

.chev {
	width: 4px;
	height: 4px;
}

.chev.left {
	transform: translateX(1px) rotate(135deg);
}

.chev.right {
	transform: translateX(-1px) rotate(-45deg);
}

.chev.up {
	transform: translateY(1px) rotate(-135deg);
}

.chev.down {
	transform: translateY(-1px) rotate(45deg);
}

.vscroll {
	width: 16px;
	flex: none;
	display: flex;
	flex-direction: column;
	align-items: center;
	padding-top: 3px;
	background-color: #f7f6f0;
}

.vthumb {
	width: 15px;
	height: 142px;
	flex: none;
	background-image: linear-gradient(90deg, #cfdcfb, #b8cdfa);
	border: 1px solid #d8e3fc;
	border-bottom-color: #8fa9e0;
	display: flex;
	align-items: center;
	justify-content: center;
}

.grip-v {
	width: 6px;
	height: 7px;
	background-image: linear-gradient(#9ab2ec 50%, transparent 50%);
	background-size: 100% 2px;
}

.vtrack {
	height: 207px;
	flex: none;
}

.navbtn {
	width: 13px;
	height: 12px;
	flex: none;
	margin-bottom: 1px;
	display: flex;
	align-items: center;
	justify-content: center;
	background-color: #eef0f8;
	border: 1px solid #3f5f8c;
	border-radius: 2px;
}

.tbrow.third {
	background-image: linear-gradient(#f4f2e6, #e8e5d3);
	border-bottom: 1px solid #d8d5c2;
}

/* status bar */
.statusbar {
	height: 18px;
	flex: none;
	display: flex;
	align-items: center;
	gap: 3px;
	padding: 0 5px 1px 3px;
	background-color: #ece9d8;
}

.field {
	height: 14px;
	line-height: 12px;
	padding: 0 3px;
	flex: none;
	color: #333;
	border: 1px solid #bdbaa8;
	border-radius: 1px;
	white-space: nowrap;
}

.f-page { width: 191px; margin-right: 1px; }
.f-style { width: 210px; margin-right: 1px; padding-left: 2px; }
.f-zoom { width: 29px; text-align: center; margin-right: 1px; padding: 0; }
.f-ins { width: 32px; text-align: center; padding: 0; }
.f-std { width: 26px; text-align: center; padding: 0; }
.f-hyp { width: 20px; text-align: center; margin-right: 1px; padding: 0; }
.f-star { width: 8px; text-align: center; margin-right: 1px; padding: 0; }
.f-blank { width: 15px; margin-right: 1px; }
.f-cell { width: 250px; text-align: center; }

/* floating toolbar */
.palette {
	position: absolute;
	left: 341px;
	top: 252px;
	width: 256px;
	height: 67px;
	background-color: #f1efe3;
	border: 1px solid #c4c1b0;
	border-width: 1px 2px 2px 1px;
	display: flex;
	flex-direction: column;
}

.pal-title {
	height: 16px;
	flex: none;
	display: flex;
	align-items: center;
	padding-left: 3px;
	background-color: #b4af9c;
}

.pal-name {
	font-weight: bold;
	font-size: 9.5px;
	color: #111;
}

.pal-arrow {
	margin-left: auto;
	border-left: 3px solid transparent;
	border-right: 3px solid transparent;
	border-top: 4px solid #111;
}

.pal-close {
	width: 10px;
	height: 10px;
	margin: 0 3px 0 6px;
}

.pal-row {
	height: 23px;
	flex: none;
	display: flex;
	align-items: center;
}

.pal-row.one {
	padding-left: 3px;
	margin-top: 1px;
}

.pal-row.two {
	padding-left: 4px;
}
```
